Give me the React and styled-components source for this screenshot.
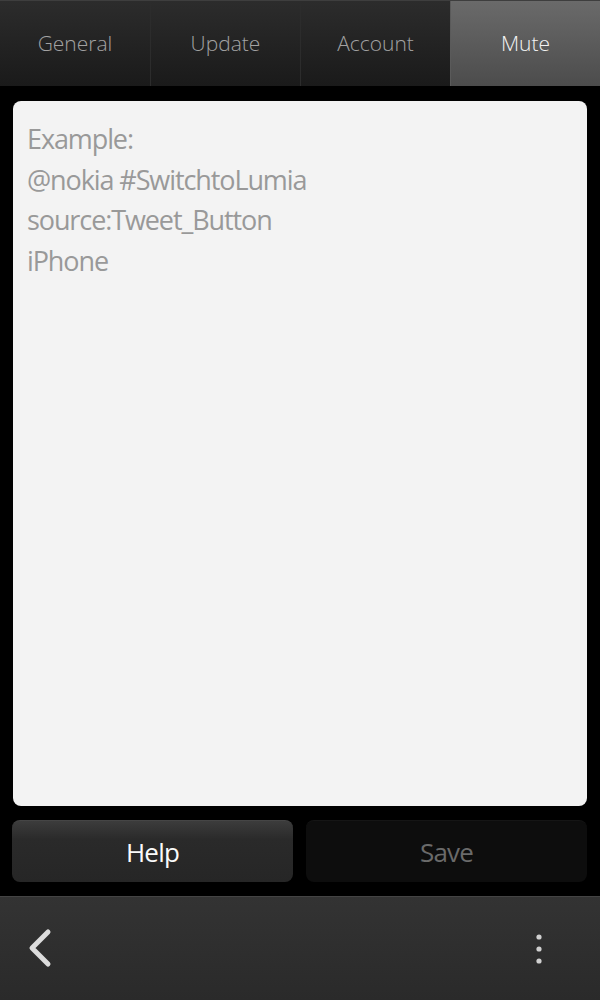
import React from "react";
import styled, { createGlobalStyle } from "styled-components";

const tabs = ["General", "Update", "Account", "Mute"];
const lines = ["Example:", "@nokia #SwitchtoLumia", "source:Tweet_Button", "iPhone"];

export default function App() {
  return (
    <>
      <GlobalStyle />
      <Screen>
        <TabBar>
          {tabs.map((t) => (
            <Tab key={t} $active={t === "Mute"}>
              {t}
            </Tab>
          ))}
        </TabBar>
        <Content>
          <Editor>
            {lines.map((l) => (
              <Line key={l}>{l}</Line>
            ))}
          </Editor>
          <Buttons>
            <Button>Help</Button>
            <Button $disabled>Save</Button>
          </Buttons>
        </Content>
        <ToolBar>
          <IconButton aria-label="back">
            <svg width="30" height="44" viewBox="0 0 30 44">
              <path
                d="M21 5 L5 21 L21 37"
                fill="none"
                stroke="#dcdcdc"
                strokeWidth="5"
                strokeLinecap="round"
                strokeLinejoin="round"
              />
            </svg>
          </IconButton>
          <IconButton aria-label="menu">
            <svg width="10" height="36" viewBox="0 0 10 36">
              <circle cx="5" cy="6" r="2.6" fill="#d0d0d0" />
              <circle cx="5" cy="18" r="2.6" fill="#d0d0d0" />
              <circle cx="5" cy="30" r="2.6" fill="#d0d0d0" />
            </svg>
          </IconButton>
        </ToolBar>
      </Screen>
    </>
  );
}

const GlobalStyle = createGlobalStyle`
  body {
    margin: 0;
    background: #000;
    font-family: "Open Sans", "Liberation Sans", sans-serif;
  }
`;

const Screen = styled.div`
  width: 600px;
  height: 1000px;
  display: flex;
  flex-direction: column;
  background: #000;
`;

const TabBar = styled.div`
  height: 86px;
  display: grid;
  grid-template-columns: repeat(4, 1fr);
  border-top: 1px solid #3e3e3e;
  box-sizing: border-box;
`;

const Tab = styled.div`
  display: flex;
  align-items: center;
  justify-content: center;
  padding-bottom: 2px;
  font-weight: 300;
  font-size: 21px;
  color: ${(p) => (p.$active ? "#f2f2f2" : "#a2a2a2")};
  background: ${(p) =>
    p.$active
      ? "linear-gradient(#6a6a6a, #4c4c4c)"
      : "linear-gradient(#2c2c2c, #1a1a1a)"};
  border-left: 1px solid ${(p) => (p.$active ? "#5a5a5a" : "#2c2c2c")};
  &:first-child {
    border-left: none;
  }
`;

const Content = styled.div`
  flex: 1;
  display: flex;
  flex-direction: column;
  padding: 15px 13px 14px 12px;
  gap: 14px;
`;

const Editor = styled.div`
  height: 705px;
  margin-left: 1px;
  background: #f3f3f3;
  border-radius: 8px;
  padding: 18px 14px;
  box-sizing: border-box;
`;

const Line = styled.div`
  font-size: 27px;
  line-height: 40.5px;
  color: #999;
  letter-spacing: -1.1px;
`;

const Buttons = styled.div`
  display: grid;
  grid-template-columns: 1fr 1fr;
  gap: 13px;
`;

const Button = styled.div`
  height: 62px;
  border-radius: 8px;
  display: flex;
  align-items: center;
  justify-content: center;
  font-size: 26px;
  letter-spacing: -0.8px;
  color: ${(p) => (p.$disabled ? "#6a6a6a" : "#fafafa")};
  background: ${(p) =>
    p.$disabled ? "#0d0d0d" : "linear-gradient(#3c3c3c, #2a2a2a 30%, #262626)"};
  border-top: 1px solid ${(p) => (p.$disabled ? "#151515" : "#454545")};
  box-sizing: border-box;
`;

const ToolBar = styled.div`
  height: 104px;
  display: flex;
  align-items: center;
  justify-content: space-between;
  padding: 0 56px 0 27px;
  background: linear-gradient(#333, #2a2a2a);
  border-top: 1px solid #444;
  box-sizing: border-box;
`;

const IconButton = styled.div`
  display: flex;
  align-items: center;
  justify-content: center;
`;
